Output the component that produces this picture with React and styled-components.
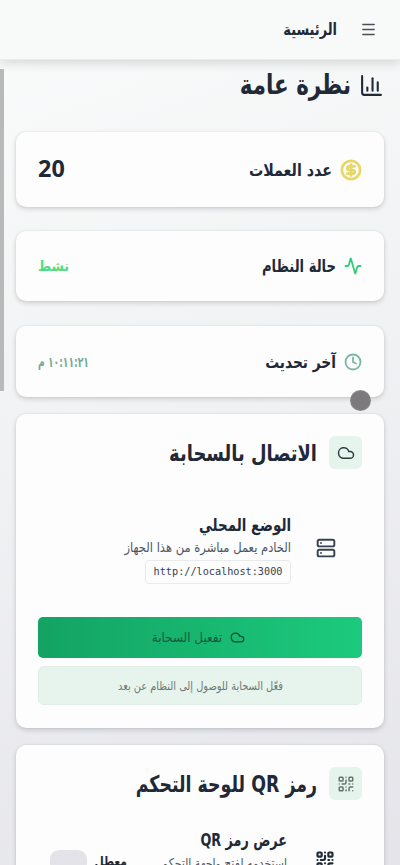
import React from "react";
import styled, { createGlobalStyle } from "styled-components";
import { Menu, ChartColumn, CircleDollarSign, Activity, Clock, Cloud, Server, QrCode } from "lucide-react";

const GlobalStyle = createGlobalStyle`
  * { box-sizing: border-box; }
  body { margin: 0; overflow: hidden; font-family: "DejaVu Sans Condensed", "DejaVu Sans", sans-serif; font-stretch: condensed; color: #1f2937; }
`;
const Page = styled.div`
  position: relative; direction: rtl; height: 865px; overflow: hidden;
  display: flex; flex-direction: column;
  background: linear-gradient(160deg, #fafbfb 0%, #f1f2f3 45%, #e4e4ea 100%);
`;
const Header = styled.header`
  height: 60px; flex: none; display: flex; align-items: center; gap: 23px; padding: 0 23px 0 0;
  background: #f8faf9; border-bottom: 1px solid #e9ebec; box-shadow: 0 3px 10px rgba(30, 35, 45, 0.16);
`;
const Text = styled.span`
  display: block; white-space: nowrap; flex: none;
  width: ${(p) => p.$w}px; height: ${(p) => p.$h || 24}px; line-height: ${(p) => p.$h || 24}px;
  font-size: ${(p) => p.$size}px; font-weight: ${(p) => p.$weight || 400}; color: ${(p) => p.$color || "#1f2937"};
  transform: scaleX(${(p) => p.$sx || 1}); transform-origin: right center;
`;
const Main = styled.main`
  display: flex; flex-direction: column; flex: none; padding: 0 16px;
`;
const TitleRow = styled.div`
  display: flex; align-items: center; gap: 8px; height: 50px; margin-bottom: 22px;
`;
const Card = styled.section`
  height: ${(p) => p.$h}px; margin-bottom: ${(p) => p.$mb}px; flex: none; padding: 0 22px;
  background: #fdfdfe; border-radius: 10px;
  box-shadow: 0 0 0 1px rgba(30, 40, 60, 0.025), 0 2px 5px rgba(30, 35, 45, 0.18);
`;
const StatCard = styled(Card)`
  display: flex; align-items: center; gap: 8px;
`;
const Value = styled.span`
  margin-right: auto; white-space: nowrap; line-height: 24px;
  padding-bottom: ${(p) => p.$lift || 0}px;
  font-family: ${(p) => p.$font || "inherit"};
  font-size: ${(p) => p.$size}px; font-weight: 700; color: ${(p) => p.$color};
  transform: scaleX(${(p) => p.$sx || 1}); transform-origin: left center;
`;
const CardHeader = styled.div`
  display: flex; align-items: center; gap: 12px; padding-top: 22px;
`;
const IconTile = styled.div`
  width: 33px; height: 33px; border-radius: 6px; background: #e5f4ec;
  display: flex; align-items: center; justify-content: center; color: #2d3a40;
`;
const ModeRow = styled.div`
  display: flex; align-items: center; gap: 25px; height: 72px; margin: 43px 0 33px; padding-right: 26px;
`;
const ModeInfo = styled.div`
  display: flex; flex-direction: column; align-items: flex-start;
`;
const Address = styled.code`
  display: flex; align-items: center; justify-content: center; direction: ltr;
  width: 146px; height: 24px; margin-top: 3px; border: 1px solid #e8eaec; border-radius: 4px;
  font-family: "DejaVu Sans Mono", monospace; font-stretch: normal; font-size: 10.2px; color: #374151;
`;
const ActionButton = styled.button`
  width: 100%; height: 41px; border: 0; border-radius: 5px; padding: 0 4px 0 0; font: inherit;
  display: flex; align-items: center; justify-content: center; gap: 7px; color: #154d39;
  background: linear-gradient(90deg, #13a363, #1cca7d);
`;
const Hint = styled.div`
  height: 39px; margin-top: 8px; border-radius: 6px; background: #e6f4ed; border: 1px solid #e0eee8;
  display: flex; align-items: center; justify-content: center;
`;
const QrRow = styled.div`
  display: flex; align-items: flex-start; padding: 0 27px 0 12px; margin-top: 28px;
`;
const QrIcon = styled.div`
  width: 20px; height: 20px; margin: 22px 0 0 28px; color: #1f2937; svg { display: block; }
`;
const ToggleWrap = styled.div`
  margin-right: auto; display: flex; gap: 8px; padding-top: 21px;
`;
const Toggle = styled.div`
  width: 37px; height: 22px; margin-top: 1px; border-radius: 9px; background: #e4e3e9;
`;
const Scrollbar = styled.div`
  position: absolute; left: 0; top: 69px; width: 4px; height: 322px; background: #b9b9b9;
`;
const Pointer = styled.div`
  position: absolute; left: 350px; top: 390px; width: 21px; height: 21px; border-radius: 50%;
  background: radial-gradient(circle, #7d7a7d 60%, rgba(125, 122, 125, 0.35) 100%);
`;

export default function App() {
  return (
    <Page>
      <GlobalStyle />
      <Header>
        <Menu size={17} color="#475057" strokeWidth={2} />
        <Text $w={54} $size={16.5} $sx={0.87} $weight={700}>الرئيسية</Text>
      </Header>
      <Main>
        <TitleRow>
          <ChartColumn size={25} strokeWidth={2} />
          <Text $w={111} $h={36} $size={28} $sx={0.85} $weight={700}>نظرة عامة</Text>
        </TitleRow>
        <StatCard $h={75} $mb={24}>
          <CircleDollarSign size={22} color="#e8d667" strokeWidth={3} />
          <Text $w={83} $size={17} $sx={0.93} $weight={700}>عدد العملات</Text>
          <Value $size={23.4} $lift={3} $color="#1f2937" $font='"Noto Sans", sans-serif'>20</Value>
        </StatCard>
        <StatCard $h={70} $mb={25}>
          <Activity size={18} color="#2fce76" strokeWidth={2.4} />
          <Text $w={74} $size={17} $sx={0.86} $weight={700}>حالة النظام</Text>
          <Value $size={14} $color="#4ade80">نشط</Value>
        </StatCard>
        <StatCard $h={71} $mb={17}>
          <Clock size={18} color="#79b8a2" strokeWidth={2.4} />
          <Text $w={71} $size={17} $sx={0.9} $weight={700}>آخر تحديث</Text>
          <Value $size={14} $sx={0.73} $color="#76a994">١٠:١١:٢١ م</Value>
        </StatCard>
        <Card $h={314} $mb={17}>
          <CardHeader>
            <IconTile><Cloud size={18} /></IconTile>
            <Text $w={147} $h={32} $size={23} $sx={0.865} $weight={700}>الاتصال بالسحابة</Text>
          </CardHeader>
          <ModeRow>
            <Server size={20} color="#374151" strokeWidth={2.3} />
            <ModeInfo>
              <Text $w={92} $h={25} $size={17.5} $sx={0.85} $weight={700}>الوضع المحلي</Text>
              <Text $w={167} $h={19} $size={13.5} $sx={0.95} $color="#4b5563">الخادم يعمل مباشرة من هذا الجهاز</Text>
              <Address>http://localhost:3000</Address>
            </ModeInfo>
          </ModeRow>
          <ActionButton>
            <Cloud size={15} />
            <Text $w={71} $size={13.3} $color="#165b41">تفعيل السحابة</Text>
          </ActionButton>
          <Hint>
            <Text $w={165} $size={12} $sx={0.91} $color="#6b7b76">فعّل السحابة للوصول إلى النظام عن بعد</Text>
          </Hint>
        </Card>
        <Card $h={220} $mb={0}>
          <CardHeader>
            <IconTile><QrCode size={18} color="#66736f" /></IconTile>
            <Text $w={182} $h={32} $size={23} $sx={0.84} $weight={700}>رمز QR للوحة التحكم</Text>
          </CardHeader>
          <QrRow>
            <QrIcon><QrCode size={20} strokeWidth={2.6} /></QrIcon>
            <ModeInfo>
              <Text $w={87} $h={25} $size={17.5} $sx={0.81} $weight={700}>عرض رمز QR</Text>
              <Text $w={127} $h={20} $size={13.5} $sx={0.9} $color="#4b5563">استخدمه لفتح واجهة التحكم</Text>
            </ModeInfo>
            <ToggleWrap>
              <Text $w={32} $size={13.5} $sx={0.88} $weight={700}>معطل</Text>
              <Toggle />
            </ToggleWrap>
          </QrRow>
        </Card>
      </Main>
      <Scrollbar />
      <Pointer />
    </Page>
  );
}
